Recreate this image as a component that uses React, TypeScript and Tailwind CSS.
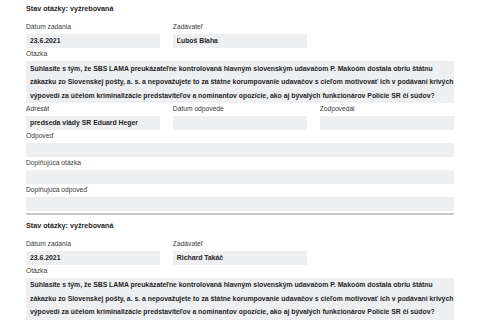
const questionLines = [
  'Súhlasite s tým, že SBS LAMA preukázateľne kontrolovaná hlavným slovenským udavačom P. Makoóm dostala obriu štátnu',
  'zákazku zo Slovenskej pošty, a. s. a nepovažujete to za štátne korumpovanie udavačov s cieľom motivovať ich v podávaní krivých',
  'výpovedí za účelom kriminalizácie predstaviteľov a nominantov opozície, ako aj bývalých funkcionárov Polície SR či súdov?',
];

function Field({ label, value, lines }: { label: string; value?: string; lines?: string[] }) {
  return (
    <div>
      <div className="text-[6.7px] leading-[11px] text-[#3a3a3a] mb-[2px]">{label}</div>
      {lines ? (
        <div className="bg-[#eeeff1] px-[4px] py-[0.5px] text-[6.85px] font-bold leading-[13.6px] text-[#1e1e1e]">
          {lines.map((l) => (
            <div key={l} className="whitespace-nowrap">
              {l}
            </div>
          ))}
        </div>
      ) : (
        <div className="bg-[#eeeff1] px-[4px] h-[14px] text-[6.85px] font-bold leading-[14px] text-[#1e1e1e]">
          {value}
        </div>
      )}
    </div>
  );
}

interface Question {
  date: string;
  author: string;
  addressee?: string;
}

function QuestionCard({ q, full }: { q: Question; full: boolean }) {
  return (
    <div className={full ? 'pb-[2px] border-b-[2px] border-[#c6c6c6]' : ''}>
      <div className="text-[7.2px] font-bold leading-[12px] mb-[6px] text-[#1e1e1e]">Stav otázky: vyžrebovaná</div>
      <div className="grid grid-cols-3 gap-x-[12.5px]">
        <Field label="Dátum zadania" value={q.date} />
        <Field label="Zadávateľ" value={q.author} />
      </div>
      <Field label="Otázka" lines={questionLines} />
      {full && (
        <>
          <div className="grid grid-cols-3 gap-x-[12.5px]">
            <Field label="Adresát" value={q.addressee} />
            <Field label="Dátum odpovede" />
            <Field label="Zodpovedal" />
          </div>
          <Field label="Odpoveď" />
          <Field label="Doplňujúca otázka" />
          <Field label="Doplňujúca odpoveď" />
        </>
      )}
    </div>
  );
}

export default function App() {
  return (
    <div className="w-[480px] h-[323px] overflow-hidden bg-white px-[26px] pt-[3px] font-['Liberation_Sans',Arial,sans-serif]">
      <QuestionCard
        q={{ date: '23.6.2021', author: 'Ľuboš Blaha', addressee: 'predseda vlády SR Eduard Heger' }}
        full
      />
      <div className="pt-[5px]">
        <QuestionCard q={{ date: '23.6.2021', author: 'Richard Takáč' }} full={false} />
      </div>
    </div>
  );
}
